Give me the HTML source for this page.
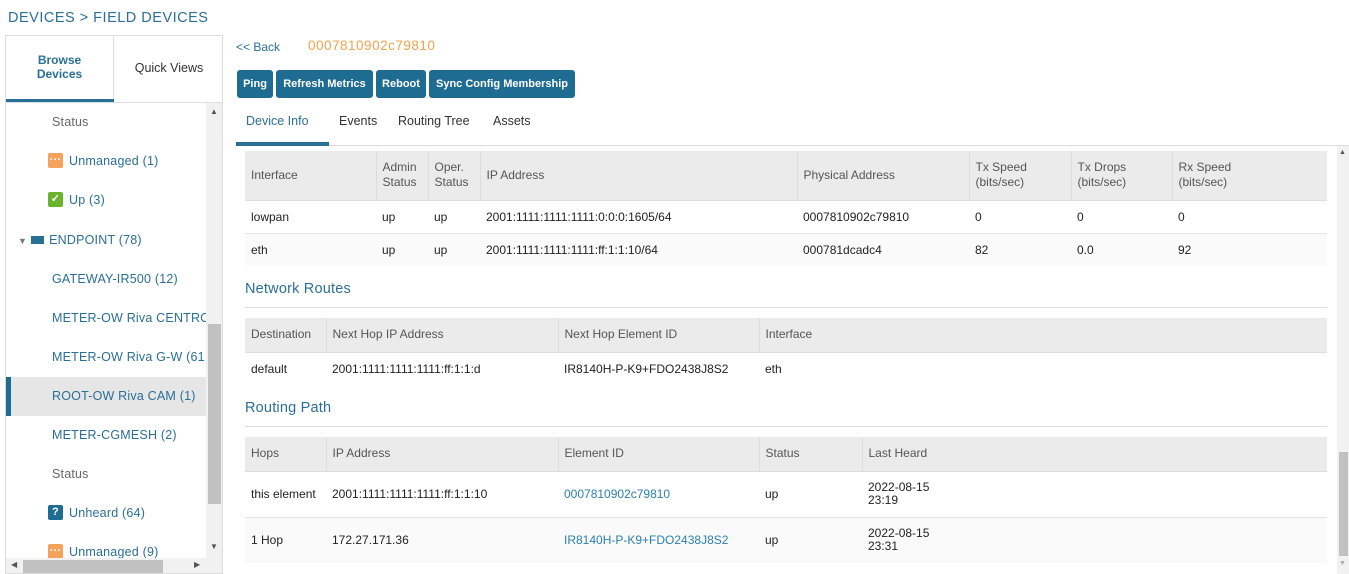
<!DOCTYPE html>
<html><head><meta charset="utf-8"><style>
*{box-sizing:border-box;margin:0;padding:0}
body{width:1349px;height:574px;overflow:hidden;background:#fff;font-family:"Liberation Sans",Arial,sans-serif;font-size:12px;color:#222;position:relative}
.a{position:absolute;white-space:nowrap}
.li{position:absolute;left:0;width:200px;height:39px;line-height:39px;font-size:12.5px;color:#2a6f97;letter-spacing:.2px}
.btn{position:absolute;top:70px;height:28px;line-height:28px;background:#1f6c93;color:#fff;font-weight:bold;font-size:11px;border-radius:3px;text-align:center}
table{position:absolute;left:245px;width:1082px;border-collapse:collapse;font-size:12px}
th{background:#ebebeb;color:#555;font-weight:normal;text-align:left;padding:0 6px;border-left:1px solid #ddd;border-bottom:1px solid #ddd;line-height:15px}
th:first-child{border-left:none}
td{padding:0 6px;border-bottom:1px solid #e3e3e3;color:#222}
tr.alt td{background:#fafafa}
.h{position:absolute;left:245px;font-size:14.5px;color:#2a6f97;letter-spacing:.2px}
.hl{position:absolute;left:245px;width:1082px;height:1px;background:#ddd}
.icon{display:inline-block;width:15px;height:15px;border-radius:2px;vertical-align:middle;margin-right:6px;margin-top:-3px;color:#fff;font-size:11px;line-height:15px;text-align:center;font-weight:bold}
</style></head><body>
<div class="a" style="left:8px;top:10px;font-size:14.5px;color:#2a6f97;letter-spacing:.5px">DEVICES &gt; FIELD DEVICES</div>

<div class="a" style="left:5px;top:35px;width:218px;height:539px;border:1px solid #ddd;overflow:hidden">
  <div class="a" style="left:0;top:0;width:108px;height:67px;border-right:1px solid #ddd;text-align:center;font-weight:bold;color:#2a6f97;font-size:12px;line-height:14px;padding-top:17px">Browse<br>Devices</div>
  <div class="a" style="left:0;top:63px;width:108px;height:4px;background:#2a6f97"></div>
  <div class="a" style="left:108px;top:0;width:110px;height:67px;line-height:65px;text-align:center;color:#333;font-size:12.5px">Quick Views</div>
  <div class="a" style="left:0;top:66px;width:218px;height:1px;background:#ddd"></div>
  <div class="a" style="left:0;top:67px;width:200px;height:455px;overflow:hidden">
    <div class="li" style="top:0;padding-left:46px;color:#666">Status</div>
    <div class="li" style="top:39px;padding-left:42px"><span class="icon" style="background:#f5a25d">···</span>Unmanaged (1)</div>
    <div class="li" style="top:78px;padding-left:42px"><span class="icon" style="background:#6ab42d">✓</span>Up (3)</div>
    <div class="li" style="top:118px;padding-left:12px"><span style="color:#777;font-size:9px;margin-right:4px">▼</span><span style="display:inline-block;width:13px;height:8px;background:#2a6f97;margin-right:5px"></span>ENDPOINT (78)</div>
    <div class="li" style="top:157px;padding-left:46px">GATEWAY-IR500 (12)</div>
    <div class="li" style="top:196px;padding-left:46px">METER-OW Riva CENTRO</div>
    <div class="li" style="top:235px;padding-left:46px">METER-OW Riva G-W (61</div>
    <div class="li" style="top:274px;background:#e6e6e6;border-left:5px solid #1f6c93;padding-left:41px">ROOT-OW Riva CAM (1)</div>
    <div class="li" style="top:313px;padding-left:46px">METER-CGMESH (2)</div>
    <div class="li" style="top:352px;padding-left:46px;color:#666">Status</div>
    <div class="li" style="top:391px;padding-left:42px"><span class="icon" style="background:#1f6c93">?</span>Unheard (64)</div>
    <div class="li" style="top:430px;padding-left:42px"><span class="icon" style="background:#f5a25d">···</span>Unmanaged (9)</div>
  </div>
  <div class="a" style="left:200px;top:67px;width:17px;height:455px;background:#f1f1f1"></div>
  <div class="a" style="left:202px;top:288px;width:13px;height:180px;background:#c1c1c1"></div>
  <div class="a" style="left:204px;top:71px;font-size:8px;color:#555">▲</div>
  <div class="a" style="left:204px;top:506px;font-size:8px;color:#555">▼</div>
  <div class="a" style="left:0;top:522px;width:217px;height:17px;background:#f1f1f1"></div>
  <div class="a" style="left:17px;top:524px;width:140px;height:13px;background:#c1c1c1"></div>
  <div class="a" style="left:5px;top:524px;font-size:8px;color:#555">◀</div>
  <div class="a" style="left:188px;top:524px;font-size:8px;color:#555">▶</div>
</div>

<div class="a" style="left:236px;top:40px;font-size:12px;color:#2a6f97">&lt;&lt; Back</div>
<div class="a" style="left:308px;top:38px;font-size:13.5px;color:#f0a24e;letter-spacing:.5px">0007810902c79810</div>
<div class="btn" style="left:237px;width:36px">Ping</div>
<div class="btn" style="left:276px;width:97px">Refresh Metrics</div>
<div class="btn" style="left:376px;width:50px">Reboot</div>
<div class="btn" style="left:429px;width:146px">Sync Config Membership</div>
<div class="a" style="left:246px;top:114px;font-size:12.5px;color:#2a6f97">Device Info</div>
<div class="a" style="left:339px;top:114px;font-size:12.5px;color:#333">Events</div>
<div class="a" style="left:398px;top:114px;font-size:12.5px;color:#333">Routing Tree</div>
<div class="a" style="left:493px;top:114px;font-size:12.5px;color:#333">Assets</div>
<div class="a" style="left:236px;top:145px;width:1113px;height:1px;background:#ddd"></div>
<div class="a" style="left:236px;top:142px;width:93px;height:4px;background:#2a6f97"></div>

<table style="top:151px">
<tr style="height:49px"><th style="width:131px">Interface</th><th style="width:52px">Admin<br>Status</th><th style="width:52px">Oper.<br>Status</th><th style="width:317px">IP Address</th><th style="width:172px">Physical Address</th><th style="width:102px">Tx Speed<br>(bits/sec)</th><th style="width:101px">Tx Drops<br>(bits/sec)</th><th>Rx Speed<br>(bits/sec)</th></tr>
<tr style="height:33px"><td>lowpan</td><td>up</td><td>up</td><td>2001:1111:1111:1111:0:0:0:1605/64</td><td>0007810902c79810</td><td>0</td><td>0</td><td>0</td></tr>
<tr class="alt" style="height:33px"><td style="border:none">eth</td><td style="border:none">up</td><td style="border:none">up</td><td style="border:none">2001:1111:1111:1111:ff:1:1:10/64</td><td style="border:none">000781dcadc4</td><td style="border:none">82</td><td style="border:none">0.0</td><td style="border:none">92</td></tr>
</table>

<div class="h" style="top:281px">Network Routes</div>
<div class="hl" style="top:307px"></div>
<table style="top:318px">
<tr style="height:34px"><th style="width:81px">Destination</th><th style="width:232px">Next Hop IP Address</th><th style="width:201px">Next Hop Element ID</th><th>Interface</th></tr>
<tr style="height:34px"><td style="border:none">default</td><td style="border:none">2001:1111:1111:1111:ff:1:1:d</td><td style="border:none">IR8140H-P-K9+FDO2438J8S2</td><td style="border:none">eth</td></tr>
</table>

<div class="h" style="top:400px">Routing Path</div>
<div class="hl" style="top:426px"></div>
<table style="top:437px">
<tr style="height:34px"><th style="width:81px">Hops</th><th style="width:232px">IP Address</th><th style="width:201px">Element ID</th><th style="width:103px">Status</th><th>Last Heard</th></tr>
<tr style="height:46px"><td>this element</td><td>2001:1111:1111:1111:ff:1:1:10</td><td style="color:#2a7fb0">0007810902c79810</td><td>up</td><td style="line-height:13px">2022-08-15<br>23:19</td></tr>
<tr class="alt" style="height:46px"><td style="border:none">1 Hop</td><td style="border:none">172.27.171.36</td><td style="border:none;color:#2a7fb0">IR8140H-P-K9+FDO2438J8S2</td><td style="border:none">up</td><td style="border:none;line-height:13px">2022-08-15<br>23:31</td></tr>
</table>

<div class="a" style="left:1337px;top:146px;width:12px;height:428px;background:#f1f1f1"></div>
<div class="a" style="left:1339px;top:452px;width:9px;height:104px;background:#c1c1c1"></div>
<div class="a" style="left:1339px;top:149px;font-size:7px;color:#555">▲</div>
<div class="a" style="left:1339px;top:560px;font-size:7px;color:#aaa">▼</div>
</body></html>
